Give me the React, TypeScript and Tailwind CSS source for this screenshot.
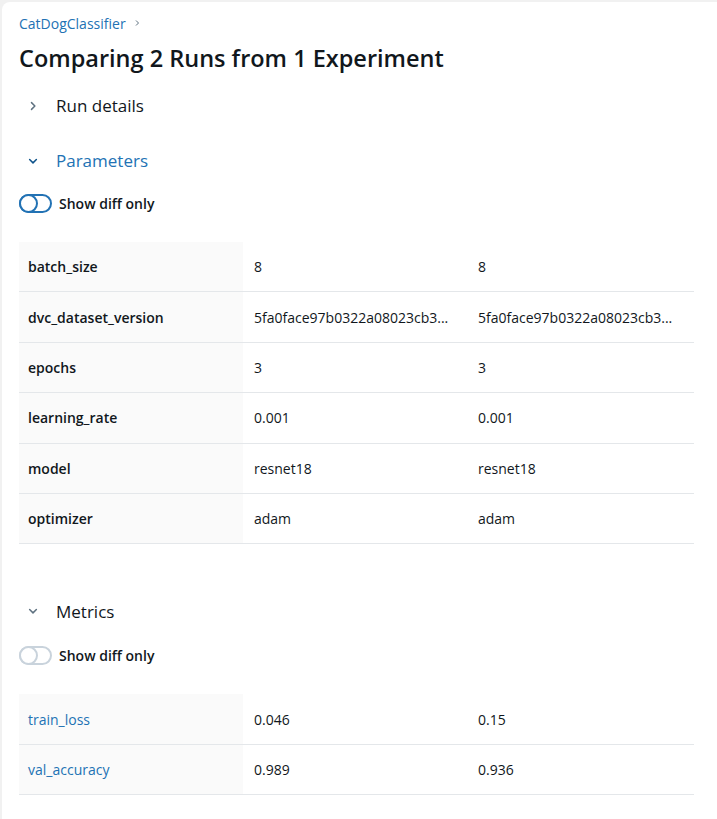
import React from "react";

const font = { fontFamily: '"Open Sans", "Noto Sans", sans-serif' };

function Chevron({ open, color }: { open: boolean; color: string }) {
  return (
    <svg width="12" height="12" viewBox="0 0 16 16" fill="none" className={open ? "" : "-rotate-90"}>
      <path d="M3.5 6 L8 10.5 L12.5 6" stroke={color} strokeWidth="2" strokeLinecap="round" strokeLinejoin="round" />
    </svg>
  );
}

function Toggle({ active }: { active: boolean }) {
  return (
    <div
      className={`w-[33px] h-[19px] rounded-full border-2 flex items-center ${
        active ? "border-[#2272b4]" : "border-[#c9d3dc]"
      }`}
    >
      <div
        className={`w-[19px] h-[19px] -ml-[2px] rounded-full border-2 bg-white ${
          active ? "border-[#2272b4]" : "border-[#c9d3dc]"
        }`}
      />
    </div>
  );
}

type Row = { k: string; a: string; b: string };

function Table({ rows, link }: { rows: Row[]; link?: boolean }) {
  return (
    <div className="mr-[23px] ml-[17px]">
      {rows.map((r) => (
        <div key={r.k} className="grid grid-cols-[224px_225px_1fr] h-[50.4px] border-b border-[#e4e7ea] text-[14px] text-[#11171c]">
          <div className={`bg-[#fafafa] flex items-center pl-[9px] ${link ? "text-[#2272b4]" : "font-semibold"}`}>{r.k}</div>
          <div className="flex items-center pl-[11px] pr-2 min-w-0">
            <span className="whitespace-nowrap">{r.a}</span>
          </div>
          <div className="flex items-center pl-[10px] pr-2 min-w-0">
            <span className="whitespace-nowrap">{r.b}</span>
          </div>
        </div>
      ))}
    </div>
  );
}

export default function App() {
  const params: Row[] = [
    { k: "batch_size", a: "8", b: "8" },
    { k: "dvc_dataset_version", a: "5fa0face97b0322a08023cb3...", b: "5fa0face97b0322a08023cb3..." },
    { k: "epochs", a: "3", b: "3" },
    { k: "learning_rate", a: "0.001", b: "0.001" },
    { k: "model", a: "resnet18", b: "resnet18" },
    { k: "optimizer", a: "adam", b: "adam" },
  ];
  const metrics: Row[] = [
    { k: "train_loss", a: "0.046", b: "0.15" },
    { k: "val_accuracy", a: "0.989", b: "0.936" },
  ];
  return (
    <div className="w-[717px] h-[819px] bg-[#f1f1f1] pt-[2px] pl-[2px] overflow-hidden" style={font}>
      <div className="bg-white rounded-tl-[8px] h-[817px] w-[715px] pt-[9px]">
        <div className="pl-[17px] flex items-center gap-[7px] text-[14px] text-[#2272b4] h-[20px] mt-[2px]">
          <span>CatDogClassifier</span>
          <svg width="8" height="8" viewBox="0 0 16 16"><path d="M6 3 L11 8 L6 13" stroke="#5f7281" strokeWidth="2" fill="none" /></svg>
        </div>
        <h1 className="pl-[17px] mt-[9px] text-[23.5px] font-semibold text-[#11171c] leading-[32px]">Comparing 2 Runs from 1 Experiment</h1>
        <div className="flex items-center pl-[25px] mt-[20px] h-[24px] text-[17px] text-[#11171c]">
          <Chevron open={false} color="#5f7281" />
          <span className="ml-[17px]">Run details</span>
        </div>
        <div className="flex items-center pl-[25px] mt-[31px] h-[24px] text-[17px] text-[#2272b4]">
          <Chevron open={true} color="#0e538b" />
          <span className="ml-[17px]">Parameters</span>
        </div>
        <div className="flex items-center pl-[17px] mt-[20px] h-[20px] gap-[7px]">
          <Toggle active={true} />
          <span className="text-[14px] font-semibold text-[#11171c]">Show diff only</span>
        </div>
        <div className="mt-[29px]">
          <Table rows={params} />
        </div>
        <div className="flex items-center pl-[25px] mt-[55px] h-[24px] text-[17px] text-[#11171c]">
          <Chevron open={true} color="#5f7281" />
          <span className="ml-[17px]">Metrics</span>
        </div>
        <div className="flex items-center pl-[17px] mt-[22px] h-[20px] gap-[7px]">
          <Toggle active={false} />
          <span className="text-[14px] font-semibold text-[#11171c]">Show diff only</span>
        </div>
        <div className="mt-[29px]">
          <Table rows={metrics} link />
        </div>
      </div>
    </div>
  );
}
